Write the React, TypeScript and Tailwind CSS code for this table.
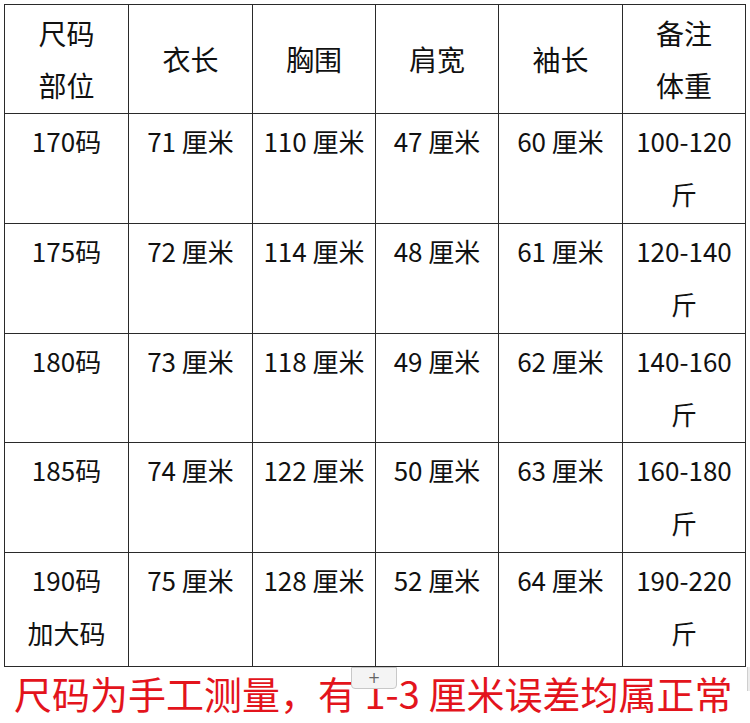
const FONT = "font-['Noto_Sans_CJK_SC','Noto_Sans',sans-serif]";

const COLS = ["w-[124px]", "w-[124px]", "w-[123px]", "w-[123px]", "w-[124px]", "w-[123px]"];
const ROW_H = ["h-[110px]", "h-[110px]", "h-[109px]", "h-[110px]", "h-[114px]"];

const ROWS: string[][][] = [
	[["170码"], ["71 厘米"], ["110 厘米"], ["47 厘米"], ["60 厘米"], ["100-120", "斤"]],
	[["175码"], ["72 厘米"], ["114 厘米"], ["48 厘米"], ["61 厘米"], ["120-140", "斤"]],
	[["180码"], ["73 厘米"], ["118 厘米"], ["49 厘米"], ["62 厘米"], ["140-160", "斤"]],
	[["185码"], ["74 厘米"], ["122 厘米"], ["50 厘米"], ["63 厘米"], ["160-180", "斤"]],
	[["190码", "加大码"], ["75 厘米"], ["128 厘米"], ["52 厘米"], ["64 厘米"], ["190-220", "斤"]],
];

const HEADER: string[][] = [["尺码", "部位"], ["衣长"], ["胸围"], ["肩宽"], ["袖长"], ["备注", "体重"]];

export default function App() {
	return (
		<div className={`relative w-[750px] h-[723px] bg-white overflow-hidden text-[#111] ${FONT}`}>
			<div className="pl-[4px] pt-[4px]">
				<div className="w-fit border-l border-t border-[#2a2a2a]">
					{/* Header */}
					<div className="flex h-[109px]">
						{HEADER.map((lines, i) => (
							<div
								key={i}
								className={`${COLS[i]} shrink-0 border-r border-b border-[#2a2a2a] flex flex-col items-center justify-center text-[28px] leading-[52px]`}
							>
								{lines.map((l) => (
									<div key={l}>{l}</div>
								))}
							</div>
						))}
					</div>

					{/* Data rows */}
					{ROWS.map((row, r) => (
						<div key={r} className={`flex ${ROW_H[r]}`}>
							{row.map((lines, i) => (
								<div
									key={i}
									className={`${COLS[i]} shrink-0 border-r border-b border-[#2a2a2a] flex flex-col items-center text-[26px] leading-[53px] whitespace-nowrap`}
								>
									{lines.map((l) => (
										<div key={l}>{l}</div>
									))}
								</div>
							))}
						</div>
					))}
				</div>
			</div>

			<div className="pl-[14px] text-[38px] leading-[52px] text-[#e3141c] whitespace-nowrap">
				尺码为手工测量，有 1-3 厘米误差均属正常
			</div>

			{/* Word-style insert row handle */}
			<div className="absolute left-[351px] top-[667px] w-[46px] h-[22px] bg-[#f4f4f4] border border-[#c8c8c8] rounded-b-[4px] flex items-center justify-center text-[#666] text-[15px] leading-none font-['DejaVu_Sans',sans-serif]">
				+
			</div>
			<div className="absolute left-[747px] top-[667px] w-[3px] h-[24px] bg-[#ececec] border-l border-[#cfcfcf]" />
		</div>
	);
}
